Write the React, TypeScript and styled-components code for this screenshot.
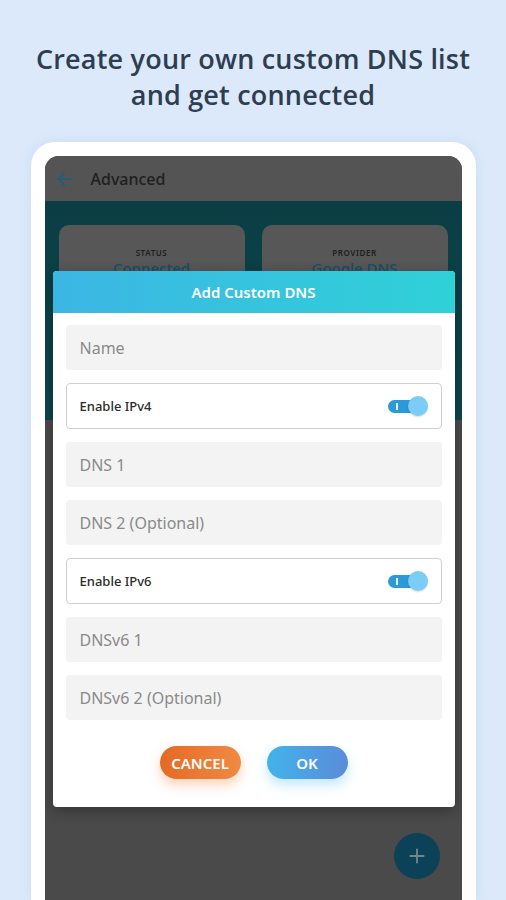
import React from 'react';
import styled, { createGlobalStyle } from 'styled-components';

const GlobalStyle = createGlobalStyle`
  html, body {
    margin: 0;
    padding: 0;
    background: #dbe9fb;
    overflow: hidden;
  }
  * {
    box-sizing: border-box;
  }
`;

const Page = styled.div`
  width: 506px;
  height: 900px;
  overflow: hidden;
  display: flex;
  flex-direction: column;
  align-items: center;
  background: #dbe9fb;
  font-family: 'Noto Sans', 'Open Sans', sans-serif;
`;

const Headline = styled.h1`
  margin: 41px 0 0;
  font-family: 'Open Sans', 'Noto Sans', sans-serif;
  font-size: 27px;
  font-weight: 600;
  line-height: 36px;
  letter-spacing: 0.2px;
  text-align: center;
  color: #2e3d4f;
`;

const PhoneFrame = styled.div`
  margin-top: 29px;
  width: 445px;
  flex: 1;
  background: #ffffff;
  border-radius: 24px 24px 0 0;
  padding: 14px 14px 0;
  box-shadow: 0 0 12px rgba(120, 150, 190, 0.15);
  display: flex;
`;

const Screen = styled.div`
  position: relative;
  flex: 1;
  border-radius: 14px 14px 0 0;
  overflow: hidden;
  background: #4a4a4b;
  display: flex;
  flex-direction: column;
`;

const AppBar = styled.div`
  height: 45px;
  background: #545454;
  display: flex;
  align-items: center;
  padding-left: 10px;
  gap: 16px;
`;

const AppTitle = styled.span`
  font-size: 16px;
  font-weight: 500;
  color: #1f1f1f;
`;

const TealHeader = styled.div`
  height: 219px;
  background: linear-gradient(180deg, #0a3e44 0%, #0c464c 100%);
  display: grid;
  grid-template-columns: 1fr 1fr;
  gap: 17px;
  padding: 24px 14px 0;
  align-items: start;
`;

const InfoCard = styled.div`
  height: 110px;
  background: #575757;
  border-radius: 10px;
  display: flex;
  flex-direction: column;
  align-items: center;
  padding-top: 22px;
`;

const CardLabel = styled.span`
  font-size: 8px;
  letter-spacing: 0.6px;
  color: #1e1e1e;
  font-weight: 600;
`;

const CardValue = styled.span`
  font-size: 15px;
  font-weight: 500;
  color: #174d66;
`;

const Body = styled.div`
  flex: 1;
  display: flex;
  justify-content: flex-end;
  align-items: flex-end;
  padding: 0 22px 21px 0;
`;

const Fab = styled.div`
  width: 46px;
  height: 46px;
  border-radius: 50%;
  background: #0b4257;
  display: flex;
  align-items: center;
  justify-content: center;
`;

const Dialog = styled.div`
  position: absolute;
  top: 115px;
  left: 8px;
  width: 402px;
  background: #ffffff;
  border-radius: 4px;
  overflow: hidden;
  box-shadow: 0 4px 14px rgba(0, 0, 0, 0.3);
`;

const DialogHeader = styled.div`
  height: 42px;
  background: linear-gradient(90deg, #3cb6e4 0%, #2fd1d8 100%);
  display: flex;
  align-items: center;
  justify-content: center;
  color: #ffffff;
  font-size: 15px;
  font-weight: 600;
`;

const Form = styled.div`
  display: flex;
  flex-direction: column;
  gap: 13px;
  padding: 12px 13px 0;
`;

const Field = styled.div`
  height: 45px;
  background: #f3f3f3;
  border-radius: 4px;
  display: flex;
  align-items: center;
  padding-left: 14px;
  font-size: 16px;
  color: #8a8a8a;
`;

const ToggleRow = styled.div`
  height: 46px;
  background: #ffffff;
  border: 1px solid #cfcfcf;
  border-radius: 4px;
  display: flex;
  align-items: center;
  justify-content: space-between;
  padding: 0 13px;
  font-size: 13px;
  font-weight: 500;
  color: #2b2b2b;
`;

const Switch = styled.div`
  position: relative;
  width: 40px;
  height: 22px;
  display: flex;
  align-items: center;
`;

const Track = styled.div`
  width: 30px;
  height: 13px;
  border-radius: 7px;
  background: #2b9ad6;
  display: flex;
  align-items: center;
  padding-left: 8px;
`;

const TrackMark = styled.div`
  width: 2px;
  height: 7px;
  background: #e6f6ff;
`;

const Thumb = styled.div`
  position: absolute;
  right: 0;
  top: 1px;
  width: 20px;
  height: 20px;
  border-radius: 50%;
  background: #79cdf6;
  box-shadow: 0 1px 2px rgba(0, 0, 0, 0.15);
`;

const Actions = styled.div`
  display: flex;
  justify-content: center;
  gap: 26px;
  padding: 26px 0 28px;
`;

const PillButton = styled.div<{ $tone: 'orange' | 'blue' }>`
  width: 81px;
  height: 33px;
  border-radius: 17px;
  display: flex;
  align-items: center;
  justify-content: center;
  color: #ffffff;
  font-size: 15px;
  font-weight: 600;
  background: ${(p) =>
    p.$tone === 'orange'
      ? 'linear-gradient(90deg, #e46a25 0%, #f08a43 100%)'
      : 'linear-gradient(90deg, #42b3ea 0%, #5b8bd9 100%)'};
  box-shadow: ${(p) =>
    p.$tone === 'orange'
      ? '0 6px 12px rgba(240, 130, 60, 0.35)'
      : '0 6px 12px rgba(80, 190, 240, 0.35)'};
`;

const Toggle = () => (
  <Switch>
    <Track>
      <TrackMark />
    </Track>
    <Thumb />
  </Switch>
);

export default function App() {
  return (
    <Page>
      <GlobalStyle />
      <Headline>
        Create your own custom DNS list
        <br />
        and get connected
      </Headline>
      <PhoneFrame>
        <Screen>
          <AppBar>
            <svg width="20" height="20" viewBox="0 0 24 24" fill="none" stroke="#1b5f7e" strokeWidth="2" strokeLinecap="round" strokeLinejoin="round">
              <path d="M20 12H4" />
              <path d="M11 5l-7 7 7 7" />
            </svg>
            <AppTitle>Advanced</AppTitle>
          </AppBar>
          <TealHeader>
            <InfoCard>
              <CardLabel>STATUS</CardLabel>
              <CardValue>Connected</CardValue>
            </InfoCard>
            <InfoCard>
              <CardLabel>PROVIDER</CardLabel>
              <CardValue>Google DNS</CardValue>
            </InfoCard>
          </TealHeader>
          <Body>
            <Fab>
              <svg width="22" height="22" viewBox="0 0 24 24" fill="none" stroke="#71878f" strokeWidth="2">
                <path d="M12 4v16M4 12h16" />
              </svg>
            </Fab>
          </Body>
          <Dialog>
            <DialogHeader>Add Custom DNS</DialogHeader>
            <Form>
              <Field>Name</Field>
              <ToggleRow>
                Enable IPv4
                <Toggle />
              </ToggleRow>
              <Field>DNS 1</Field>
              <Field>DNS 2 (Optional)</Field>
              <ToggleRow>
                Enable IPv6
                <Toggle />
              </ToggleRow>
              <Field>DNSv6 1</Field>
              <Field>DNSv6 2 (Optional)</Field>
            </Form>
            <Actions>
              <PillButton $tone="orange">CANCEL</PillButton>
              <PillButton $tone="blue">OK</PillButton>
            </Actions>
          </Dialog>
        </Screen>
      </PhoneFrame>
    </Page>
  );
}
